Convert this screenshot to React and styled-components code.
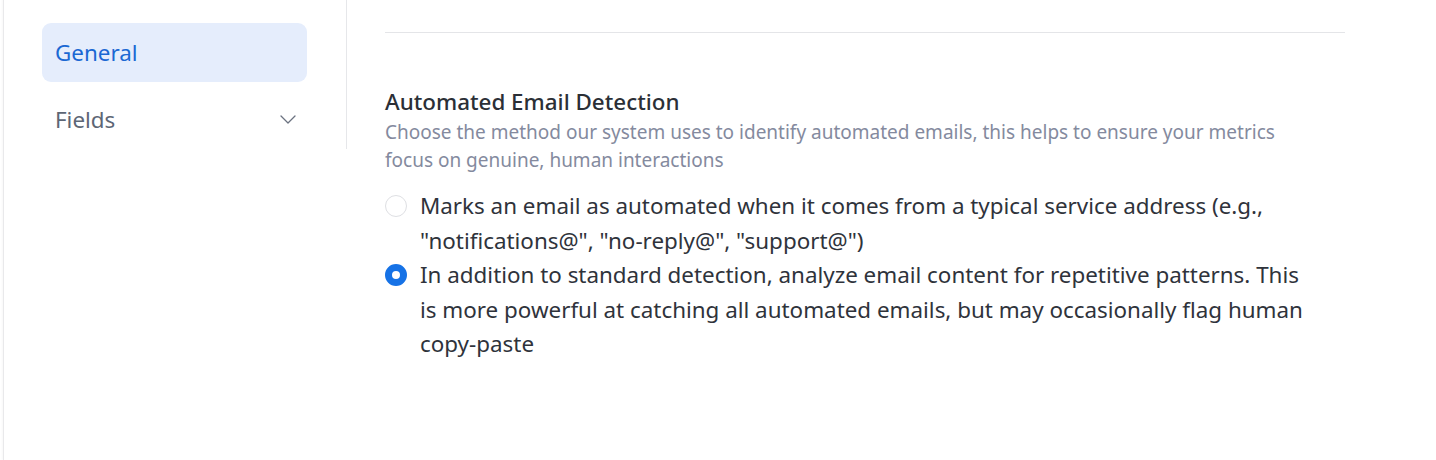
import React, { useState } from 'react'
import styled, { createGlobalStyle } from 'styled-components'

const GlobalStyle = createGlobalStyle`
  html, body {
    margin: 0;
    padding: 0;
    background: #ffffff;
  }
  body {
    font-family: "Noto Sans", "Open Sans", sans-serif;
    color: #2b2f36;
    -webkit-font-smoothing: antialiased;
  }
`

const options = [
  {
    id: 'standard',
    label: 'Marks an email as automated when it comes from a typical service address (e.g., "notifications@", "no-reply@", "support@")',
  },
  {
    id: 'advanced',
    label: 'In addition to standard detection, analyze email content for repetitive patterns. This is more powerful at catching all automated emails, but may occasionally flag human copy-paste',
  },
]

const ChevronDown = () => (
  <svg width="16" height="9" viewBox="0 0 16 9" fill="none" stroke="#6b7280" strokeWidth="1.3" strokeLinecap="round" strokeLinejoin="round">
    <path d="M1 1l7 7 7-7" />
  </svg>
)

const App = () => {
  const [method, setMethod] = useState('advanced')

  return (
    <>
      <GlobalStyle />
      <Page>
        <Sidebar>
          <NavList>
            <NavItem>Support</NavItem>
            <NavItem active>General</NavItem>
            <NavItem>
              Fields
              <ChevronDown />
            </NavItem>
          </NavList>
        </Sidebar>
        <Content>
          <Divider />
          <Section>
            <Title>Automated Email Detection</Title>
            <Description>
              Choose the method our system uses to identify automated emails, this helps to ensure your metrics focus on genuine, human interactions
            </Description>
            <RadioGroup>
              {options.map((o) => (
                <RadioRow key={o.id} onClick={() => setMethod(o.id)}>
                  <RadioDot checked={method === o.id} />
                  <RadioLabel>{o.label}</RadioLabel>
                </RadioRow>
              ))}
            </RadioGroup>
          </Section>
        </Content>
      </Page>
    </>
  )
}

export default App

const Page = styled.div`
  display: flex;
  align-items: flex-start;
  margin-left: 3px;
  margin-top: -44px;
  min-height: 504px;
  border-left: 1px solid #e9e9eb;
  box-shadow: -1px 0 2px rgba(0, 0, 0, 0.03);
`

const Sidebar = styled.aside`
  width: 343px;
  box-sizing: border-box;
  padding: 0 39px 0 38px;
  border-right: 1px solid #e6e7ea;
`

const NavList = styled.nav`
  display: flex;
  flex-direction: column;
  gap: 8px;
`

const NavItem = styled.div`
  height: 59px;
  box-sizing: border-box;
  padding: 0 11px 0 13px;
  display: flex;
  align-items: center;
  justify-content: space-between;
  border-radius: 9px;
  font-size: 22.4px;
  color: ${(p) => (p.active ? '#1b68d3' : '#5d6675')};
  background: ${(p) => (p.active ? '#e5edfc' : 'transparent')};
  cursor: pointer;
`

const Content = styled.main`
  flex: 1;
  padding: 0 91px 0 38px;
`

const Divider = styled.hr`
  margin: 76px 0 0;
  border: 0;
  border-top: 1px solid #e4e5e8;
`

const Section = styled.section`
  padding-top: 54px;
`

const Title = styled.h3`
  margin: 0;
  font-size: 22.4px;
  font-weight: 500;
  line-height: 30px;
  color: #2b2f36;
`

const Description = styled.p`
  margin: 1px 0 0;
  max-width: 925px;
  font-size: 19px;
  line-height: 28px;
  color: #848a9e;
`

const RadioGroup = styled.div`
  margin-top: 15px;
  display: flex;
  flex-direction: column;
`

const RadioRow = styled.label`
  display: flex;
  align-items: flex-start;
  gap: 13px;
  cursor: pointer;
`

const RadioDot = styled.span`
  flex: none;
  width: 22px;
  height: 22px;
  margin-top: 6px;
  box-sizing: border-box;
  border-radius: 50%;
  border: ${(p) => (p.checked ? '7px solid #1672e6' : '1.5px solid #dedfe3')};
  background: #ffffff;
`

const RadioLabel = styled.span`
  max-width: 890px;
  font-size: 22.4px;
  line-height: 34.5px;
  color: #2f333b;
`
